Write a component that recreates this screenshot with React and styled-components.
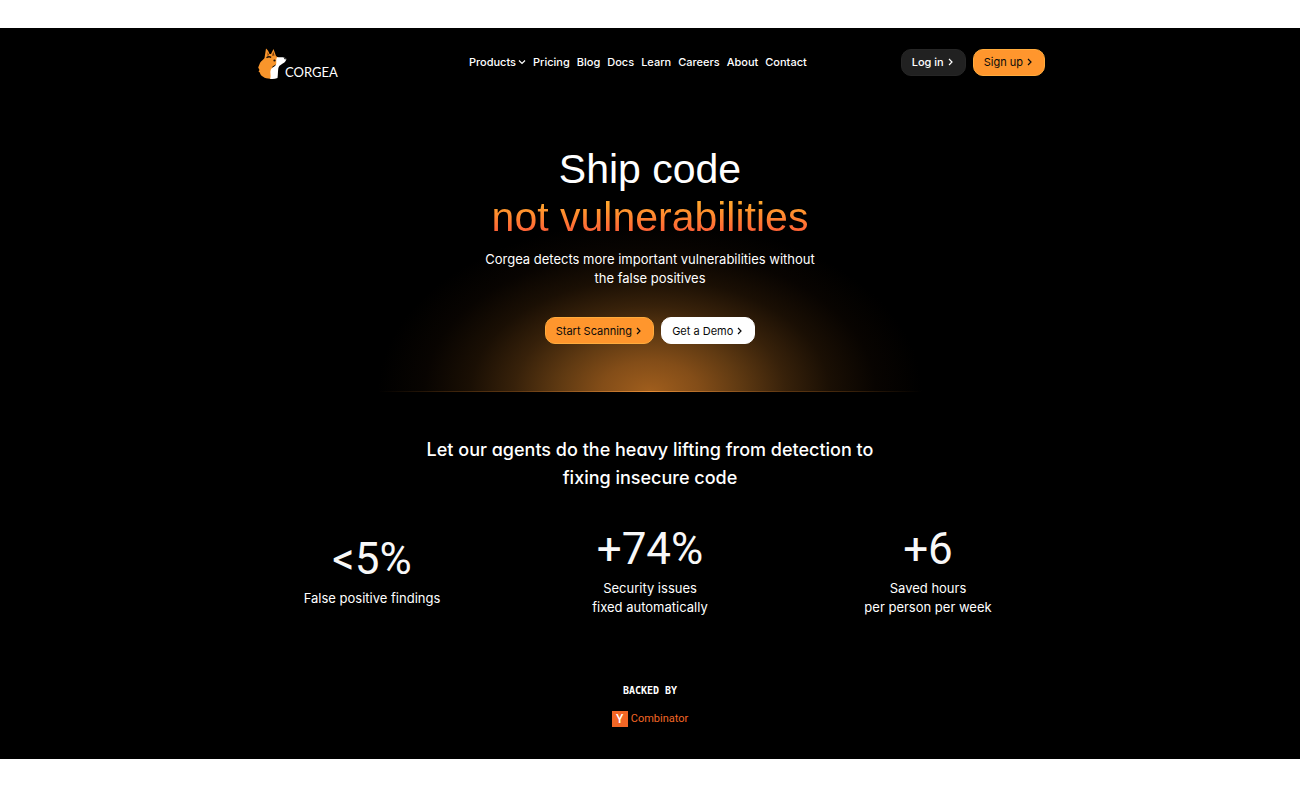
import React from 'react';
import styled, { createGlobalStyle } from 'styled-components';

const GlobalStyle = createGlobalStyle`
  * {
    box-sizing: border-box;
  }

  body {
    background: #fff;
    color: #fff;
    font-family: Inter, "Liberation Sans", sans-serif;
    margin: 0;
  }

  h1, h2, p {
    margin: 0;
  }
`;

const Page = styled.div`
  background: #000;
  margin: 28px 0;
  padding-bottom: 32px;
`;

const Hero = styled.section`
  background: radial-gradient(
    ellipse 272px 172px at 50% 100%,
    #a05e1d 0%,
    #834d18 18%,
    #603a12 33%,
    #37210a 50%,
    #1a0f04 66%,
    #080401 83%,
    #000 100%
  );
  padding-bottom: 48px;
  position: relative;

  &::after {
    background: linear-gradient(90deg, transparent, #5b3511 25%, #e58c36 50%, #5b3511 75%, transparent);
    bottom: 0;
    content: '';
    height: 1px;
    left: 50%;
    position: absolute;
    transform: translateX(-50%);
    width: 544px;
  }
`;

const Header = styled.header`
  align-items: center;
  display: flex;
  justify-content: space-between;
  margin: 0 auto;
  max-width: 790px;
  padding: 17px 0;
`;

const Brand = styled.a`
  color: #fff;
  display: block;
  width: 120px;
`;

const Nav = styled.nav`
  align-items: center;
  display: flex;
  gap: 7px;
`;

const NavLink = styled.a`
  align-items: center;
  color: #fff;
  display: flex;
  font-size: 11px;
  font-weight: 500;
  gap: 2px;
  line-height: 16px;
  text-decoration: none;
`;

const ButtonGroup = styled.div`
  display: flex;
  gap: 7px;
  justify-content: center;
`;

const buttonColors = {
  dark: { background: '#212121', border: '#262626', text: '#fff' },
  orange: { background: '#ff962d', border: '#ffab3d', text: '#0a0a0a' },
  white: { background: '#fff', border: '#fff', text: '#0a0a0a' },
};

const Button = styled.button`
  align-items: center;
  background: ${({ $tone }) => buttonColors[$tone].background};
  border: 1px solid ${({ $tone }) => buttonColors[$tone].border};
  border-radius: 10px;
  color: ${({ $tone }) => buttonColors[$tone].text};
  cursor: pointer;
  display: flex;
  font-family: inherit;
  font-size: 11px;
  font-weight: ${({ $tone }) => ($tone === 'dark' ? 500 : 400)};
  gap: 3px;
  height: 27px;
  padding: 0 10px;
`;

const Intro = styled.div`
  padding-top: 49px;
  text-align: center;
`;

const Title = styled.h1`
  font-family: "Liberation Sans", Arial, sans-serif;
  font-size: 41px;
  font-weight: 400;
  line-height: 48px;
`;

const Highlight = styled.span`
  background: linear-gradient(#ffb02e 10%, #ff962d 35%, #ff5c38 85%);
  background-clip: text;
  color: transparent;
  display: block;
`;

const Subtitle = styled.p`
  font-size: 13px;
  line-height: 19px;
  margin: 9px auto 29px;
`;

const Agents = styled.section`
  padding-top: 44px;
  text-align: center;
`;

const AgentsTitle = styled.h2`
  font-feature-settings: "cv11";
  font-size: 18px;
  font-weight: 500;
  line-height: 28px;
`;

const Stats = styled.div`
  align-items: center;
  display: grid;
  grid-template-columns: repeat(3, 1fr);
  margin: 31px auto 0;
  max-width: 834px;
`;

const StatValue = styled.div`
  color: #f8f8f8;
  font-family: Roboto, "Liberation Sans", sans-serif;
  font-size: 44px;
  font-weight: 400;
  line-height: 52px;
`;

const StatLabel = styled.p`
  font-size: 13px;
  line-height: 19px;
  padding-top: 4px;
  white-space: pre-line;
`;

const Backers = styled.section`
  align-items: center;
  display: flex;
  flex-direction: column;
  gap: 13px;
  padding-top: 67px;
`;

const BackersLabel = styled.p`
  font-family: "DejaVu Sans Mono", monospace;
  font-size: 10px;
  font-weight: 700;
  line-height: 14px;
`;

const Combinator = styled.a`
  align-items: center;
  color: #f26625;
  display: flex;
  font-family: Roboto, sans-serif;
  font-size: 11px;
  gap: 3px;
  line-height: 16px;
  text-decoration: none;
`;

const CombinatorMark = styled.span`
  background: #f26625;
  color: #fff;
  font-size: 12px;
  font-weight: 500;
  height: 16px;
  text-align: center;
  width: 16px;
`;

const links = ['Pricing', 'Blog', 'Docs', 'Learn', 'Careers', 'About', 'Contact'];

const stats = [
  { value: '<5%', label: 'False positive findings' },
  { value: '+74%', label: 'Security issues\nfixed automatically' },
  { value: '+6', label: 'Saved hours\nper person per week' },
];

const LogoImage = styled.svg`
  display: block;
`;

const Logo = () => (
  <LogoImage width="86" height="34" viewBox="0 0 86 34" role="img" aria-label="Corgea">
    <path d="M11 3.500c1.500 1 2.800 3 3.500 5.500h1.500L18.500 4l2.500 7 3.500 2.500-2 5-5 3-1.500 12.200C10 34 5.500 31 4.800 27.500L3.500 26.500l1-1.500-1.300-2.500 1.800-4.500c1-2.500 4-3.500 4.500-5z" fill="#f9952b" />
    <path d="M12.500 7l1.500 3-1.500 1zM18.300 6.500l1.200 4-2.500.3z" fill="#7a3d0b" />
    <path d="M11.500 12.800c1.500-1.300 3-1.300 4.700-.5" fill="none" stroke="#1b1006" strokeWidth="1.300" />
    <path d="M22 12.200c2.500.3 5-.2 7.500.5 1.500.4 2 1 1.700 2-.7 2.300-2.700 3.300-4.200 4.300-2 1.300-3.300 2-3.700 4.500-.5 3.500-.3 6.500-.8 9.500-2.500 1-5 1.200-7.500.8 1.500-3.500-.5-5.800.8-9 1.200-2.800 4.200-2.800 5.200-5.300.8-2.500-.5-4.500 1-7.300z" fill="#fff" />
    <path d="M29 12.400c1.300.1 2.400.7 2.300 1.700-.8.600-1.800.3-2.300-.3z" fill="#333" />
    <circle cx="19.500" cy="15.500" r="1.100" fill="#1b1006" />
    <text x="30" y="32" fill="#fff" fontFamily="Lato, sans-serif" fontSize="13">CORGEA</text>
  </LogoImage>
);

const Chevron = ({ down = false }) => (
  <svg width="8" height="8" viewBox="0 0 8 8" fill="none" stroke="currentColor" strokeWidth="1.200" aria-hidden="true">
    <path d={down ? 'M1 2.500l3 3 3-3' : 'M2 1l3 3-3 3'} />
  </svg>
);

const App = () => (
  <>
    <GlobalStyle />
    <Page>
      <Hero>
        <Header>
          <Brand href="#"><Logo /></Brand>
          <Nav>
            <NavLink href="#products">
              Products
              <Chevron down />
            </NavLink>
            {links.map((link) => (
              <NavLink key={link} href={`#${link.toLowerCase()}`}>{link}</NavLink>
            ))}
          </Nav>
          <ButtonGroup>
            <Button type="button" $tone="dark">
              Log in
              <Chevron />
            </Button>
            <Button type="button" $tone="orange">
              Sign up
              <Chevron />
            </Button>
          </ButtonGroup>
        </Header>
        <Intro>
          <Title>
            Ship code
            <Highlight>not vulnerabilities</Highlight>
          </Title>
          <Subtitle>
            Corgea detects more important vulnerabilities without
            <br />
            the false positives
          </Subtitle>
          <ButtonGroup>
            <Button type="button" $tone="orange">
              Start Scanning
              <Chevron />
            </Button>
            <Button type="button" $tone="white">
              Get a Demo
              <Chevron />
            </Button>
          </ButtonGroup>
        </Intro>
      </Hero>
      <Agents>
        <AgentsTitle>
          Let our agents do the heavy lifting from detection to
          <br />
          fixing insecure code
        </AgentsTitle>
        <Stats>
          {stats.map(({ value, label }) => (
            <div key={value}>
              <StatValue>{value}</StatValue>
              <StatLabel>{label}</StatLabel>
            </div>
          ))}
        </Stats>
      </Agents>
      <Backers>
        <BackersLabel>BACKED BY</BackersLabel>
        <Combinator href="#yc">
          <CombinatorMark>Y</CombinatorMark>
          Combinator
        </Combinator>
      </Backers>
    </Page>
  </>
);

export default App;
